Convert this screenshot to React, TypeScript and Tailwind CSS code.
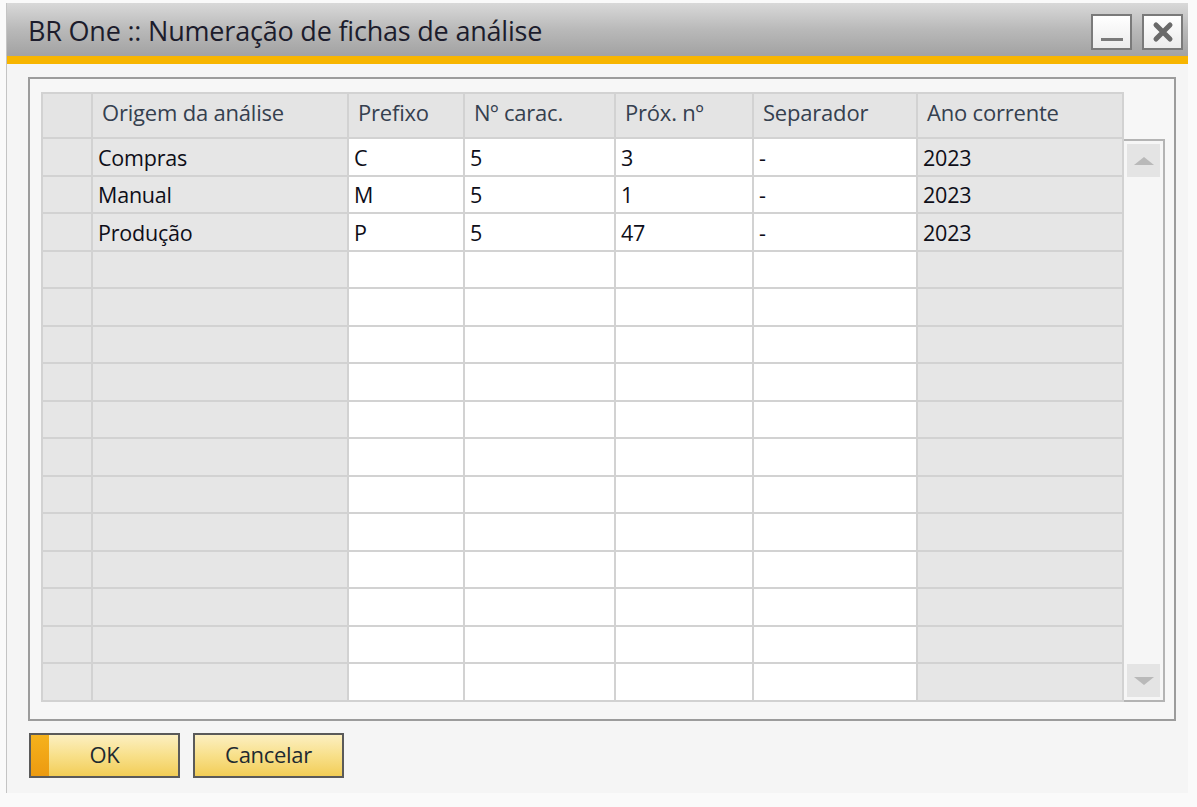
import React from "react";

const cols = [
  { w: "w-[52px]", label: "", gray: true },
  { w: "w-[256px]", label: "Origem da análise", gray: true },
  { w: "w-[116px]", label: "Prefixo", gray: false },
  { w: "w-[151px]", label: "Nº carac.", gray: false },
  { w: "w-[138px]", label: "Próx. nº", gray: false },
  { w: "w-[164px]", label: "Separador", gray: false },
  { w: "w-[206px]", label: "Ano corrente", gray: true },
];

const rows = [
  ["", "Compras", "C", "5", "3", "-", "2023"],
  ["", "Manual", "M", "5", "1", "-", "2023"],
  ["", "Produção", "P", "5", "47", "-", "2023"],
];

const emptyRows = 12;

const App = () => {
  const allRows = [...rows, ...Array.from({ length: emptyRows }, () => ["", "", "", "", "", "", ""])];

  return (
    <div
      className="w-[1197px] h-[807px] bg-[#fafafa] pt-[3px] pl-[6px] overflow-hidden"
      style={{ fontFamily: '"Open Sans", "Liberation Sans", sans-serif' }}
    >
      <div className="w-[1182px] h-[790px] flex flex-col border-l border-[#c4c4c4]">
        {/* Title bar */}
        <div className="h-[53px] flex items-center justify-between bg-gradient-to-b from-[#d9d9d9] via-[#b9b9b9] to-[#a2a2a2] pl-[21px] pr-[5px]">
          <span className="text-[27px] text-[#1c1c2c] tracking-[-0.2px] pt-[4px]">
            BR One :: Numeração de fichas de análise
          </span>
          <div className="flex gap-[10px] pt-[4px]">
            <button className="w-[41px] h-[36px] border-2 border-[#7a7a7a] bg-gradient-to-b from-white to-[#ececec] flex items-end justify-center pb-[7px]">
              <span className="block w-[22px] h-[3px] bg-[#7a7a7a]" />
            </button>
            <button className="w-[41px] h-[36px] border-2 border-[#7a7a7a] bg-gradient-to-b from-white to-[#ececec] flex items-center justify-center">
              <svg width="24" height="24" viewBox="0 0 24 24">
                <path d="M5 5 L19 19 M19 5 L5 19" stroke="#6a6a6a" strokeWidth="5" strokeLinecap="round" />
              </svg>
            </button>
          </div>
        </div>
        <div className="h-[8px] bg-[#f7b500]" />

        {/* Body */}
        <div className="flex-1 bg-[#f5f5f5] pt-[13px] pl-[21px] flex flex-col">
          <div className="w-[1148px] h-[644px] border-2 border-[#9c9c9c] bg-[#f7f7f7] pl-[11px] pt-[13px]">
            {/* Header row */}
            <div className="flex h-[47px]">
              {cols.map((c, i) => (
                <div
                  key={i}
                  className={`${c.w} shrink-0 bg-[#e4e4e4] border-r-2 border-b-2 ${i === 0 ? "border-l-2" : ""} border-t-2 border-[#d2d2d2] flex items-center pl-[9px] pb-[6px] text-[22px] text-[#35404f] tracking-[-0.2px]`}
                >
                  {c.label}
                </div>
              ))}
            </div>
            {/* Body rows + scrollbar */}
            <div className="flex">
              <div className="flex flex-col">
                {allRows.map((r, ri) => (
                  <div key={ri} className="flex h-[37.5px]">
                    {r.map((v, ci) => (
                      <div
                        key={ci}
                        className={`${cols[ci].w} shrink-0 ${cols[ci].gray ? "bg-[#e6e6e6]" : "bg-white"} border-r-2 border-b-2 ${ci === 0 ? "border-l-2" : ""} border-[#d2d2d2] flex items-center pl-[5px] pt-[2px] text-[21.5px] font-medium text-[#0e0e18] tracking-[-0.2px]`}
                      >
                        {v}
                      </div>
                    ))}
                  </div>
                ))}
              </div>
              <div className="w-[41px] h-[563px] border-t-2 border-r-2 border-b-2 border-[#b4b4b4] bg-[#f6f6f6] flex flex-col justify-between px-[3px] py-[3px]">
                <div className="h-[33px] bg-[#e4e4e4] flex items-center justify-center">
                  <svg width="22" height="10" viewBox="0 0 22 10">
                    <path d="M11 1 L21 9 L1 9 Z" fill="#b9b9b9" />
                  </svg>
                </div>
                <div className="h-[33px] bg-[#e4e4e4] flex items-center justify-center">
                  <svg width="22" height="10" viewBox="0 0 22 10">
                    <path d="M1 1 L21 1 L11 9 Z" fill="#b9b9b9" />
                  </svg>
                </div>
              </div>
            </div>
          </div>

          {/* Buttons */}
          <div className="flex gap-[13px] mt-[12px] ml-[1px]">
            <button className="relative w-[151px] h-[45px] border-2 border-[#5a5a5a] bg-gradient-to-b from-[#fcefc0] via-[#f8e08a] to-[#f2cd55] flex items-center justify-center text-[22px] text-[#1e2a30] tracking-[-0.3px]">
              <span className="absolute left-0 top-0 bottom-0 w-[18px] bg-gradient-to-b from-[#f6b21c] to-[#ec9a10]" />
              <span className="pb-[2px]">OK</span>
            </button>
            <button className="w-[151px] h-[45px] border-2 border-[#5a5a5a] bg-gradient-to-b from-[#fcefc0] via-[#f8e08a] to-[#f2cd55] flex items-center justify-center text-[22px] text-[#1e2a30] tracking-[-0.3px]">
              <span className="pb-[2px]">Cancelar</span>
            </button>
          </div>
        </div>
      </div>
    </div>
  );
};

export default App;
